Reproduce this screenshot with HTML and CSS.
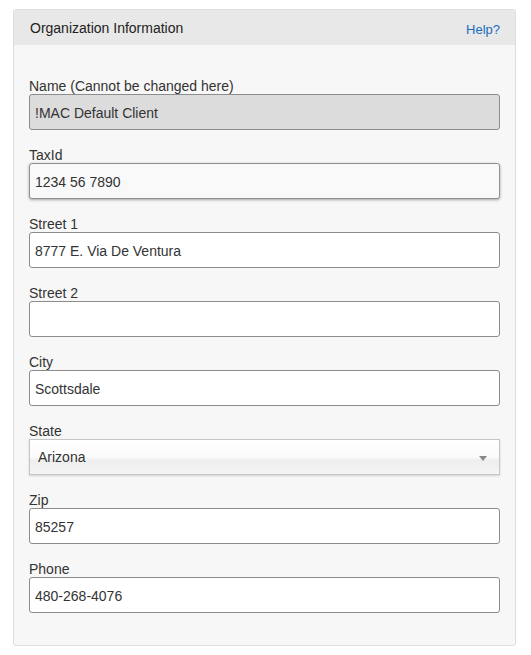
FILE: index.html
```html
<!DOCTYPE html>
<html>
<head>
<meta charset="utf-8">
<link rel="stylesheet" href="styles.css">
</head>
<body>
<div class="panel">
  <div class="panel-header">
    <span class="panel-title">Organization Information</span>
    <a class="help" href="#">Help?</a>
  </div>
  <div class="panel-body">
    <div class="field">
      <label class="label">Name (Cannot be changed here)</label>
      <div class="input input-disabled">!MAC Default Client</div>
    </div>
    <div class="field">
      <label class="label">TaxId</label>
      <div class="input input-shadow">1234 56 7890</div>
    </div>
    <div class="field">
      <label class="label">Street 1</label>
      <div class="input">8777 E. Via De Ventura</div>
    </div>
    <div class="field">
      <label class="label">Street 2</label>
      <div class="input"></div>
    </div>
    <div class="field">
      <label class="label">City</label>
      <div class="input">Scottsdale</div>
    </div>
    <div class="field">
      <label class="label">State</label>
      <div class="select"><span>Arizona</span><span class="arrow"></span></div>
    </div>
    <div class="field">
      <label class="label">Zip</label>
      <div class="input">85257</div>
    </div>
    <div class="field">
      <label class="label">Phone</label>
      <div class="input">480-268-4076</div>
    </div>
  </div>
</div>
</body>
</html>
```

FILE: styles.css
```css
html, body {
  margin: 0;
  padding: 0;
  background: #ffffff;
}
body {
  padding: 9px 15px 10px 13px;
  font-family: "Liberation Sans", Arial, sans-serif;
  color: #333333;
}
.panel {
  width: 503px;
  box-sizing: border-box;
  border: 1px solid #dddddd;
  border-radius: 3px;
  background: #f7f7f7;
}
.panel-header {
  height: 35px;
  background: #e8e8e8;
  display: flex;
  align-items: center;
  justify-content: space-between;
  padding: 0 15px 0 16px;
  border-radius: 3px 3px 0 0;
}
.panel-title {
  font-size: 14px;
  color: #222222;
}
.help {
  font-size: 13px;
  color: #1a6bbd;
  text-decoration: none;
  margin-top: 3px;
}
.panel-body {
  padding: 33px 15px 15px 15px;
}
.field {
  margin-bottom: 17px;
}
.label {
  display: block;
  font-size: 14px;
  line-height: 16px;
  color: #333333;
}
.input {
  height: 36px;
  box-sizing: border-box;
  border: 1px solid #8c8c8c;
  border-radius: 3px;
  background: #ffffff;
  padding: 1px 5px 0 5px;
  font-size: 14px;
  line-height: 34px;
  color: #333333;
}
.input-disabled {
  background: #dcdcdc;
}
.input-shadow {
  background: #f9f9f9;
  border-color: #8f8f8f;
  box-shadow: 0 1px 3px rgba(0, 0, 0, 0.35);
}
.select {
  height: 36px;
  box-sizing: border-box;
  border: 1px solid #c6c6c6;
  background: linear-gradient(to bottom, #ffffff 0%, #fbfbfb 50%, #eeeeee 60%, #f4f4f4 100%);
  box-shadow: 0 1px 2px rgba(0, 0, 0, 0.15);
  display: flex;
  align-items: center;
  justify-content: space-between;
  padding: 0 12px 0 8px;
  font-size: 14px;
  color: #333333;
}
.arrow {
  width: 0;
  height: 0;
  border-left: 4px solid transparent;
  border-right: 4px solid transparent;
  border-top: 5px solid #888888;
  margin-top: 2px;
}
```
